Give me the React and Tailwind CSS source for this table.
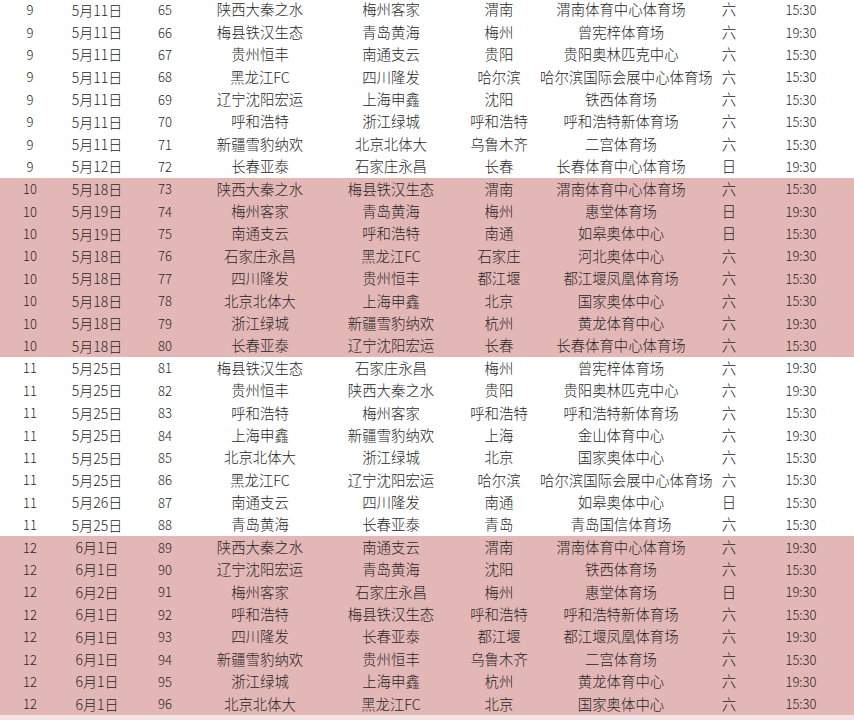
import React from 'react';

const rows = [
  ['9', '5月11日', '65', '陕西大秦之水', '梅州客家', '渭南', '渭南体育中心体育场', '六', '15:30'],
  ['9', '5月11日', '66', '梅县铁汉生态', '青岛黄海', '梅州', '曾宪梓体育场', '六', '19:30'],
  ['9', '5月11日', '67', '贵州恒丰', '南通支云', '贵阳', '贵阳奥林匹克中心', '六', '15:30'],
  ['9', '5月11日', '68', '黑龙江FC', '四川隆发', '哈尔滨', '哈尔滨国际会展中心体育场', '六', '15:30'],
  ['9', '5月11日', '69', '辽宁沈阳宏运', '上海申鑫', '沈阳', '铁西体育场', '六', '15:30'],
  ['9', '5月11日', '70', '呼和浩特', '浙江绿城', '呼和浩特', '呼和浩特新体育场', '六', '15:30'],
  ['9', '5月11日', '71', '新疆雪豹纳欢', '北京北体大', '乌鲁木齐', '二宫体育场', '六', '15:30'],
  ['9', '5月12日', '72', '长春亚泰', '石家庄永昌', '长春', '长春体育中心体育场', '日', '19:30'],
  ['10', '5月18日', '73', '陕西大秦之水', '梅县铁汉生态', '渭南', '渭南体育中心体育场', '六', '15:30'],
  ['10', '5月19日', '74', '梅州客家', '青岛黄海', '梅州', '惠堂体育场', '日', '19:30'],
  ['10', '5月19日', '75', '南通支云', '呼和浩特', '南通', '如皋奥体中心', '日', '15:30'],
  ['10', '5月18日', '76', '石家庄永昌', '黑龙江FC', '石家庄', '河北奥体中心', '六', '19:30'],
  ['10', '5月18日', '77', '四川隆发', '贵州恒丰', '都江堰', '都江堰凤凰体育场', '六', '15:30'],
  ['10', '5月18日', '78', '北京北体大', '上海申鑫', '北京', '国家奥体中心', '六', '15:30'],
  ['10', '5月18日', '79', '浙江绿城', '新疆雪豹纳欢', '杭州', '黄龙体育中心', '六', '19:30'],
  ['10', '5月18日', '80', '长春亚泰', '辽宁沈阳宏运', '长春', '长春体育中心体育场', '六', '15:30'],
  ['11', '5月25日', '81', '梅县铁汉生态', '石家庄永昌', '梅州', '曾宪梓体育场', '六', '19:30'],
  ['11', '5月25日', '82', '贵州恒丰', '陕西大秦之水', '贵阳', '贵阳奥林匹克中心', '六', '19:30'],
  ['11', '5月25日', '83', '呼和浩特', '梅州客家', '呼和浩特', '呼和浩特新体育场', '六', '15:30'],
  ['11', '5月25日', '84', '上海申鑫', '新疆雪豹纳欢', '上海', '金山体育中心', '六', '19:30'],
  ['11', '5月25日', '85', '北京北体大', '浙江绿城', '北京', '国家奥体中心', '六', '15:30'],
  ['11', '5月25日', '86', '黑龙江FC', '辽宁沈阳宏运', '哈尔滨', '哈尔滨国际会展中心体育场', '六', '15:30'],
  ['11', '5月26日', '87', '南通支云', '四川隆发', '南通', '如皋奥体中心', '日', '15:30'],
  ['11', '5月25日', '88', '青岛黄海', '长春亚泰', '青岛', '青岛国信体育场', '六', '15:30'],
  ['12', '6月1日', '89', '陕西大秦之水', '南通支云', '渭南', '渭南体育中心体育场', '六', '19:30'],
  ['12', '6月1日', '90', '辽宁沈阳宏运', '青岛黄海', '沈阳', '铁西体育场', '六', '15:30'],
  ['12', '6月2日', '91', '梅州客家', '石家庄永昌', '梅州', '惠堂体育场', '日', '19:30'],
  ['12', '6月1日', '92', '呼和浩特', '梅县铁汉生态', '呼和浩特', '呼和浩特新体育场', '六', '15:30'],
  ['12', '6月1日', '93', '四川隆发', '长春亚泰', '都江堰', '都江堰凤凰体育场', '六', '19:30'],
  ['12', '6月1日', '94', '新疆雪豹纳欢', '贵州恒丰', '乌鲁木齐', '二宫体育场', '六', '15:30'],
  ['12', '6月1日', '95', '浙江绿城', '上海申鑫', '杭州', '黄龙体育中心', '六', '19:30'],
  ['12', '6月1日', '96', '北京北体大', '黑龙江FC', '北京', '国家奥体中心', '六', '15:30'],
];

const Row = ({ r }) => {
  // rounds 10 and 12 are shaded
  const shaded = r[0] === '10' || r[0] === '12';
  return (
    <div
      className={`grid grid-cols-[60px_74px_62px_128px_134px_82px_162px_54px_90px_8px] h-[22.4px] items-center text-center ${
        shaded ? 'bg-[#e4b7b7]' : 'bg-white'
      }`}
    >
      <span className="text-[13px]">{r[0]}</span>
      <span className="text-[14px]">{r[1]}</span>
      <span className="text-[13px]">{r[2]}</span>
      <span className="whitespace-nowrap">{r[3]}</span>
      <span className="whitespace-nowrap">{r[4]}</span>
      <span className="whitespace-nowrap">{r[5]}</span>
      <span className="whitespace-nowrap">{r[6]}</span>
      <span>{r[7]}</span>
      <span className="text-[13px]">{r[8]}</span>
      <span />
    </div>
  );
};

export default function App() {
  return (
    <div className="w-[854px] h-[720px] overflow-hidden bg-white text-[#262626] text-[14.4px] font-light leading-none font-['Noto_Sans_CJK_SC',sans-serif]">
      <div className="mt-[-1.5px]">
        {rows.map((r) => (
          <Row key={r[2]} r={r} />
        ))}
        <div className="h-[6px] bg-[#f2e4e4]" />
      </div>
    </div>
  );
}
